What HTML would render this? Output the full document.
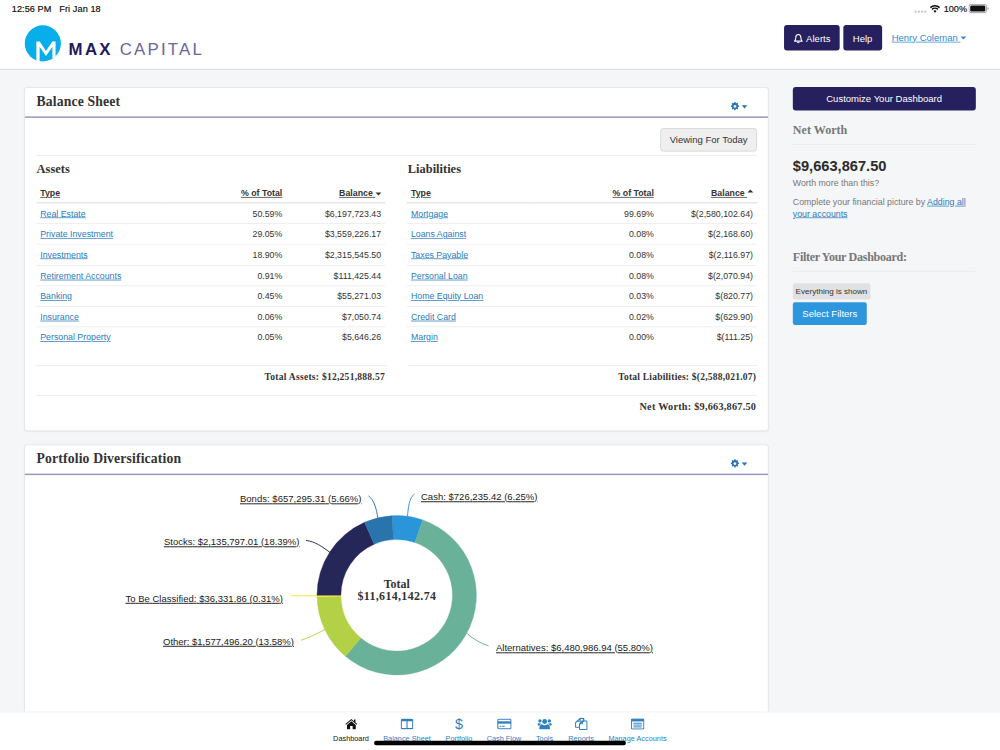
<!DOCTYPE html>
<html lang="en">
<head>
<meta charset="utf-8">
<title>Max Capital - Dashboard</title>
<style>
*{box-sizing:border-box;}
html,body{margin:0;padding:0;width:1000px;height:750px;overflow:hidden;background:#f5f6f8;}
body{font-family:"Liberation Sans",Arial,sans-serif;color:#333;}
#stage{position:absolute;left:0;top:0;width:1366px;height:1025px;transform:scale(0.73206);transform-origin:0 0;background:#f5f6f8;overflow:hidden;font-size:14px;line-height:1.42857;}
a{color:#2b7bbd;text-decoration:underline;}
.serif{font-family:"Liberation Serif","Times New Roman",serif;font-weight:bold;}
/* status bar + header */
#header{position:absolute;left:0;top:0;width:1366px;height:95.3px;background:#fff;border-bottom:1.4px solid #cfd1d4;box-shadow:0 1px 2px rgba(0,0,0,.08);}
#status{position:absolute;left:0;top:0;width:1366px;height:24px;font-size:12.5px;color:#111;line-height:24px;}
#status .l{position:absolute;left:16px;top:0;letter-spacing:.1px;-webkit-text-stroke:.25px #111;}
#status .r{position:absolute;right:14px;top:0;}
.btn-navy{position:absolute;background:#27205f;color:#fff;border-radius:4px;font-size:13px;text-align:center;}
/* panels */
.panel{position:absolute;background:#fff;border:1px solid #dfe1e5;border-radius:4px;box-shadow:0 1px 2px rgba(0,0,0,.05);}
.panel > *{margin-left:1.3px;}
.panel .hd{position:absolute;left:0;top:0;right:0;height:41px;border-bottom:2px solid #9794bb;margin-left:0;}
.panel .hd h3{margin:0;position:absolute;left:16.3px;top:7.8px;font-size:18.7px;letter-spacing:.2px;line-height:24px;color:#333;}
table{border-collapse:collapse;font-size:12px;width:100%;}
th,td{padding:6px 5px 4px;line-height:17.14px;text-align:right;border-top:1px solid #e8e9eb;white-space:nowrap;}
th{padding-top:6.8px;padding-bottom:3.2px;border-top:0;border-bottom:2px solid #e4e5e7;text-decoration:underline;font-weight:bold;color:#333;vertical-align:bottom;}
th:first-child,td:first-child{text-align:left;}
th:last-child,td:last-child{padding-right:5.8px;}
.tot{position:absolute;font-size:13px;text-align:right;color:#333;}
.sub{position:absolute;font-size:17px;color:#333;}

.hr{position:absolute;height:0;border-top:1px solid #e6e7e9;}
.tw{position:absolute;}
.gear{position:absolute;left:964.5px;top:18.1px;}
.btn-def{position:absolute;background:#efefef;border:1px solid #cfcfcf;border-radius:4px;color:#333;font-size:14px;text-align:center;}
.sh{position:absolute;font-size:16.5px;line-height:24px;color:#777;}
td a{color:#2b7bbd;}
.c1{width:36%;}
.c3{width:28.5%;}
.car{display:inline-block;width:0;height:0;border-left:4px solid transparent;border-right:4px solid transparent;vertical-align:middle;}
.car.down{border-top:4.5px solid #333;}
.car.up{border-bottom:4.5px solid #333;margin-top:-7px;}
th{text-decoration:none;}
th:first-child,th:nth-child(2),th .u{text-decoration:underline;}
#nav{position:absolute;left:0;top:972px;width:1366px;height:54px;background:#fff;border-top:1px solid #eeeff1;}
.ni{position:absolute;top:0;width:140px;height:52px;text-align:center;font-size:10px;}
.ni svg{position:absolute;left:50%;top:15.6px;transform:translate(-50%,-50%);}
.ni span{position:absolute;left:0;right:0;top:28.9px;line-height:14px;}
#homebar{position:absolute;left:511px;top:38.5px;width:344px;height:6.5px;border-radius:3.5px;background:#000;}
</style>
</head>
<body>
<div id="stage">


<div id="header">
  <div id="status">
    <span class="l">12:56 PM&nbsp;&nbsp; Fri Jan 18</span>
    <svg class="sig" width="20" height="6" viewBox="0 0 20 6" style="position:absolute;left:1247.5px;top:12.7px"><g fill="#c6c6ca"><circle cx="2.7" cy="3" r="1.55"/><circle cx="7.1" cy="3" r="1.55"/><circle cx="11.5" cy="3" r="1.55"/><circle cx="15.9" cy="3" r="1.55"/></g></svg>
    <svg width="14.4" height="11" viewBox="0 0 17 13" style="position:absolute;left:1270.3px;top:7.4px"><path d="M8.5 12.2 L5.9 9.3 A3.9 3.9 0 0 1 11.1 9.3 Z" fill="#111"/><path d="M3.7 6.9 A6.9 6.9 0 0 1 13.3 6.9" fill="none" stroke="#111" stroke-width="2.5"/><path d="M1.1 4.1 A10.6 10.6 0 0 1 15.9 4.1" fill="none" stroke="#111" stroke-width="2.5"/></svg>
    <span style="position:absolute;left:1289px;top:0;font-size:12.5px;-webkit-text-stroke:.25px #111;">100%</span>
    <svg width="30" height="14" viewBox="0 0 30 14" style="position:absolute;left:1323px;top:5px"><rect x="0.6" y="0.9" width="24" height="11.4" rx="3" fill="none" stroke="#8a8a8e" stroke-width="1.1"/><rect x="2.3" y="2.6" width="20.6" height="8" rx="1.6" fill="#111"/><path d="M26.2 4.6 a2.4 2.4 0 0 1 0 4.2z" fill="#8a8a8e"/></svg>
  </div>
  <svg id="logo" width="300" height="60" viewBox="0 0 300 60" style="position:absolute;left:30px;top:30px;overflow:visible">
    <circle cx="28.5" cy="29.3" r="24.7" fill="#08aeea"/>
    <path d="M19.7 53.8 V26.8 H24.2 L32.8 39.6 L41.4 26.8 H45.9 V47.5 L41.6 50.5 V33.8 L32.8 46.6 L24.1 33.8 V54.4 Z" fill="#fff"/>
    <text x="63.6" y="44.5" font-family="Liberation Sans, Arial, sans-serif" font-weight="bold" font-size="23" fill="#1f1a5c" textLength="57.5" lengthAdjust="spacing">MAX</text>
    <text x="133.6" y="44.5" font-family="Liberation Sans, Arial, sans-serif" font-size="23" fill="#6a659c" textLength="112" lengthAdjust="spacing">CAPITAL</text>
  </svg>
  <div class="btn-navy" style="left:1071px;top:34px;width:76px;height:35px;line-height:37px;padding-left:17.6px;">
    <svg width="13" height="14" viewBox="0 0 13 14" style="position:absolute;left:13px;top:11.8px"><path d="M6.5 1.2 C4.2 1.2 3 3 3 5.4 C3 8.2 2.2 9.2 1.2 10.2 H11.8 C10.800 9.2 10 8.200 10 5.4 C10 3 8.800 1.2 6.5 1.2 Z" fill="none" stroke="#fff" stroke-width="1.45" stroke-linejoin="round"/><path d="M5.300 11.6 a1.3 1.3 0 0 0 2.400 0" fill="none" stroke="#fff" stroke-width="1.45"/><path d="M6.5 0.300 V1.2" stroke="#fff" stroke-width="1.45"/></svg>
    Alerts</div>
  <div class="btn-navy" style="left:1152px;top:34px;width:52.5px;height:35px;line-height:37px;">Help</div>
  <a style="position:absolute;left:1218px;top:41.8px;font-size:13px;line-height:20px;white-space:pre;color:#2f8bd0">Henry Coleman </a>
  <span style="position:absolute;left:1311.5px;top:50px;width:0;height:0;border-left:4.5px solid transparent;border-right:4.5px solid transparent;border-top:4.5px solid #2f8bd0;"></span>
</div>

<!-- Balance sheet -->
<div class="panel" id="bs" style="left:32.7px;top:118.7px;width:1017.3px;height:470.3px;">
  <div class="hd"><h3 class="serif">Balance Sheet</h3><svg class="gear" width="24" height="14" viewBox="0 0 24 14"><path transform="translate(0.35 0.95) scale(0.935)" fill="#2673b8" fill-rule="evenodd" d="M5.1 0.500h1.800l0.300 1.500 1 0.400 1.300-0.800 1.300 1.300-0.800 1.300 0.400 1 1.500 0.300v1.800l-1.500 0.300-0.400 1 0.800 1.300-1.300 1.300-1.300-0.800-1 0.400-0.300 1.500h-1.800l-0.300-1.500-1-0.400-1.300 0.800-1.300-1.300 0.800-1.300-0.400-1-1.500-0.300v-1.800l1.500-0.300 0.400-1-0.800-1.300 1.300-1.300 1.300 0.800 1-0.400z M6 4.700a2.100 2.100 0 1 0 0.001 0z"/><path d="M15.200 5.800 h7.600 l-3.800 4.400z" fill="#2673b8"/></svg></div>
  <div class="btn-def" style="left:867px;top:55.5px;width:132px;height:32px;line-height:32px;font-size:13px;">Viewing For Today</div>
  <div class="hr" style="left:15px;top:92.5px;width:984px;"></div>
  <div class="sub serif" style="left:15px;top:99px;">Assets</div>
  <div class="sub serif" style="left:522px;top:99px;">Liabilities</div>
  <div class="tw" style="left:15px;top:129.4px;width:476.4px;"><table><thead><tr><th class="c1">Type</th><th>% of Total</th><th class="c3"><span class="u">Balance&nbsp;</span><i class="car down"></i></th></tr></thead><tbody>
<tr><td><a>Real Estate</a></td><td>50.59%</td><td>$6,197,723.43</td></tr>
<tr><td><a>Private Investment</a></td><td>29.05%</td><td>$3,559,226.17</td></tr>
<tr><td><a>Investments</a></td><td>18.90%</td><td>$2,315,545.50</td></tr>
<tr><td><a>Retirement Accounts</a></td><td>0.91%</td><td>$111,425.44</td></tr>
<tr><td><a>Banking</a></td><td>0.45%</td><td>$55,271.03</td></tr>
<tr><td><a>Insurance</a></td><td>0.06%</td><td>$7,050.74</td></tr>
<tr><td><a>Personal Property</a></td><td>0.05%</td><td>$5,646.26</td></tr>
</tbody></table></div>
  <div class="tw" style="left:521.4px;top:129.4px;width:478px;"><table><thead><tr><th class="c1">Type</th><th>% of Total</th><th class="c3"><span class="u">Balance&nbsp;</span><i class="car up"></i></th></tr></thead><tbody>
<tr><td><a>Mortgage</a></td><td>99.69%</td><td>$(2,580,102.64)</td></tr>
<tr><td><a>Loans Against</a></td><td>0.08%</td><td>$(2,168.60)</td></tr>
<tr><td><a>Taxes Payable</a></td><td>0.08%</td><td>$(2,116.97)</td></tr>
<tr><td><a>Personal Loan</a></td><td>0.08%</td><td>$(2,070.94)</td></tr>
<tr><td><a>Home Equity Loan</a></td><td>0.03%</td><td>$(820.77)</td></tr>
<tr><td><a>Credit Card</a></td><td>0.02%</td><td>$(629.90)</td></tr>
<tr><td><a>Margin</a></td><td>0.00%</td><td>$(111.25)</td></tr>
</tbody></table></div>
  <div class="hr" style="left:15px;top:379px;width:478px;"></div>
  <div class="hr" style="left:523px;top:379px;width:477px;"></div>
  <div class="tot serif" style="right:523px;top:386.3px;letter-spacing:.36px;">Total Assets: $12,251,888.57</div>
  <div class="tot serif" style="right:16px;top:386.3px;letter-spacing:.3px;">Total Liabilities: $(2,588,021.07)</div>
  <div class="hr" style="left:15px;top:420.2px;width:984px;"></div>
  <div class="tot serif" style="right:16px;top:426px;font-size:14px;letter-spacing:.32px;">Net Worth: $9,663,867.50</div>
</div>

<!-- Portfolio -->
<div class="panel" id="pf" style="left:32.7px;top:606.6px;width:1017.3px;height:440px;">
  <div class="hd"><h3 class="serif">Portfolio Diversification</h3><svg class="gear" width="24" height="14" viewBox="0 0 24 14"><path transform="translate(0.35 0.95) scale(0.935)" fill="#2673b8" fill-rule="evenodd" d="M5.1 0.500h1.800l0.300 1.500 1 0.400 1.300-0.800 1.300 1.300-0.800 1.300 0.400 1 1.500 0.300v1.800l-1.500 0.300-0.400 1 0.800 1.300-1.300 1.300-1.300-0.800-1 0.400-0.300 1.500h-1.800l-0.300-1.500-1-0.400-1.300 0.800-1.300-1.300 0.800-1.300-0.400-1-1.500-0.300v-1.800l1.500-0.300 0.400-1-0.800-1.300 1.300-1.300 1.300 0.800 1-0.400z M6 4.700a2.100 2.100 0 1 0 0.001 0z"/><path d="M15.200 5.800 h7.600 l-3.800 4.400z" fill="#2673b8"/></svg></div>
  <svg id="chart" width="1014" height="330" viewBox="0 0 1014 330" style="position:absolute;left:0;top:42px;font-family:'Liberation Sans',Arial,sans-serif;">
<path d="M500.44 54.46 A108.87 108.87 0 0 1 542.52 60.26 L531.84 91.11 A76.22 76.22 0 0 0 502.37 87.05 Z" fill="#2b95d9" stroke="#2b95d9" stroke-width="0.5"/>
<path d="M542.52 60.26 A108.87 108.87 0 1 1 436.91 246.54 L457.90 221.53 A76.22 76.22 0 1 0 531.84 91.11 Z" fill="#69b198" stroke="#69b198" stroke-width="0.5"/>
<path d="M436.91 246.54 A108.87 108.87 0 0 1 398.04 165.24 L430.69 164.61 A76.22 76.22 0 0 0 457.90 221.53 Z" fill="#b3d146" stroke="#b3d146" stroke-width="0.5"/>
<path d="M398.04 165.24 A108.87 108.87 0 0 1 398.02 163.12 L430.67 163.13 A76.22 76.22 0 0 0 430.69 164.61 Z" fill="#f7ea2e" stroke="#f7ea2e" stroke-width="0.5"/>
<path d="M398.02 163.12 A108.87 108.87 0 0 1 463.00 63.51 L476.16 93.39 A76.22 76.22 0 0 0 430.67 163.13 Z" fill="#262759" stroke="#262759" stroke-width="0.5"/>
<path d="M463.00 63.51 A108.87 108.87 0 0 1 500.44 54.46 L502.37 87.05 A76.22 76.22 0 0 0 476.16 93.39 Z" fill="#2974ad" stroke="#2974ad" stroke-width="0.5"/>
<path d="M521.6 55.5 C522.6 44.6 523.7 29.5 531.2 24.8" fill="none" stroke="#2b95d9" stroke-width="1.3"/>
<path d="M481.1 57.3 C479.3 45.9 475.9 32.3 468.4 27.5" fill="none" stroke="#2974ad" stroke-width="1.3"/>
<path d="M415.8 104.7 C404.9 96.5 395.3 89.6 383.0 88.3" fill="none" stroke="#262759" stroke-width="1.3"/>
<path d="M398.0 163.8 L362.5 163.8" fill="none" stroke="#f7ea2e" stroke-width="1.6"/>
<path d="M409.5 209.6 C398.0 215.3 388.5 220.8 376.2 224.6" fill="none" stroke="#b3d146" stroke-width="1.3"/>
<path d="M603.2 215.6 C611.1 222.2 620.7 229.0 632.3 232.1" fill="none" stroke="#69b198" stroke-width="1.3"/>
<text x="292.8" y="36.2" font-size="13" fill="#1a1a1a" text-decoration="underline" textLength="166.0" lengthAdjust="spacing">Bonds: $657,295.31 (5.66%)</text>
<text x="540.1" y="33.4" font-size="13" fill="#1a1a1a" text-decoration="underline" textLength="159.1" lengthAdjust="spacing">Cash: $726,235.42 (6.25%)</text>
<text x="189.0" y="94.9" font-size="13" fill="#1a1a1a" text-decoration="underline" textLength="185.1" lengthAdjust="spacing">Stocks: $2,135,797.01 (18.39%)</text>
<text x="136.4" y="172.1" font-size="13" fill="#1a1a1a" text-decoration="underline" textLength="215.1" lengthAdjust="spacing">To Be Classified: $36,331.86 (0.31%)</text>
<text x="187.7" y="230.8" font-size="13" fill="#1a1a1a" text-decoration="underline" textLength="178.9" lengthAdjust="spacing">Other: $1,577,496.20 (13.58%)</text>
<text x="642.5" y="239.7" font-size="13" fill="#1a1a1a" text-decoration="underline" textLength="214.5" lengthAdjust="spacing">Alternatives: $6,480,986.94 (55.80%)</text>
<text x="506.9" y="152.6" text-anchor="middle" font-family="Liberation Serif, Times New Roman, serif" font-weight="bold" font-size="16.300" fill="#333">Total</text>
<text x="506.9" y="169.7" text-anchor="middle" font-family="Liberation Serif, Times New Roman, serif" font-weight="bold" font-size="16.300" fill="#333" textLength="107.2" lengthAdjust="spacing">$11,614,142.74</text>
</svg>
</div>

<!-- Sidebar -->
<div id="side">
  <div class="btn-navy" style="left:1083px;top:119.4px;width:249.5px;height:32px;line-height:33px;font-size:13px;">Customize Your Dashboard</div>
  <div class="sh serif" style="left:1083px;top:166px;">Net Worth</div>
  <div class="hr" style="left:1083px;top:197px;width:249px;"></div>
  <div style="position:absolute;left:1083px;top:212px;font-size:20px;font-weight:bold;line-height:30px;color:#2b2b2b;">$9,663,867.50</div>
  <div style="position:absolute;left:1083px;top:242px;font-size:12px;line-height:17px;color:#777;">Worth more than this?</div>
  <div style="position:absolute;left:1083px;top:267.6px;width:249px;font-size:12px;line-height:16.6px;color:#777;">Complete your financial picture by <a>Adding all your accounts</a></div>
  <div class="sh serif" style="left:1083px;top:339px;letter-spacing:-.42px;">Filter Your Dashboard:</div>
  <div class="hr" style="left:1083px;top:370px;width:249px;"></div>
  <div style="position:absolute;left:1083px;top:386.5px;width:105.5px;height:22px;line-height:22px;background:#e1e1e1;border-radius:3px;font-size:11px;color:#333;text-align:center;">Everything is shown</div>
  <div style="position:absolute;left:1083px;top:412.5px;width:101px;height:31.5px;line-height:31.5px;background:#2e96dc;border-radius:3px;font-size:13px;color:#fff;text-align:center;">Select Filters</div>
</div>

<!-- bottom nav -->
<div id="nav">
<div class="ni" style="left:409.5px;color:#111"><svg width="18" height="16" viewBox="0 0 18 16"><path d="M9 1.2 L0.800 8 L1.7 9 L9 3 L16.300 9 L17.200 8 L14.600 5.800 V2 H12.600 V4.200 Z" fill="#111"/><path d="M9 4.300 L3 9.300 V15 H7.300 V10.800 H10.700 V15 H15 V9.300 Z" fill="#111"/></svg><span>Dashboard</span></div>
<div class="ni" style="left:486.0px;color:#2f7fc1"><svg width="18" height="16" viewBox="0 0 18 16"><rect x="1.2" y="1.700" width="15.600" height="12.600" rx="1.3" fill="none" stroke="#2f7fc1" stroke-width="1.500"/><path d="M1.2 3.200H16.800" stroke="#2f7fc1" stroke-width="1.800"/><path d="M9 2V14.300" stroke="#2f7fc1" stroke-width="1.500"/></svg><span>Balance Sheet</span></div>
<div class="ni" style="left:557.0px;color:#2f7fc1"><svg width="12" height="18" viewBox="0 0 12 18"><text x="6" y="15.800" text-anchor="middle" font-family="Liberation Sans, Arial, sans-serif" font-size="19.500" fill="#2f7fc1">$</text></svg><span>Portfolio</span></div>
<div class="ni" style="left:618.5px;color:#2f7fc1"><svg width="20" height="16" viewBox="0 0 20 16"><rect x="1" y="1.500" width="18" height="13" rx="1.600" fill="none" stroke="#2f7fc1" stroke-width="1.500"/><rect x="1" y="4.300" width="18" height="3.200" fill="#2f7fc1"/><rect x="3.300" y="10.500" width="2.400" height="1.300" fill="#2f7fc1"/><rect x="6.700" y="10.500" width="3.800" height="1.300" fill="#2f7fc1"/></svg><span>Cash Flow</span></div>
<div class="ni" style="left:673.8px;color:#2f7fc1"><svg width="20" height="16" viewBox="0 0 20 16"><g fill="#2f7fc1"><circle cx="10" cy="4.600" r="3.300"/><path d="M4 15.300 C3 15.300 2.700 14.600 2.700 13.800 C2.700 10.500 4.200 8.300 6.300 8.300 C7.300 9.300 8.600 9.800 10 9.800 C11.400 9.800 12.700 9.300 13.700 8.300 C15.800 8.300 17.300 10.500 17.300 13.800 C17.300 14.600 17 15.300 16 15.300 Z"/><circle cx="3.600" cy="3.800" r="2.300"/><circle cx="16.400" cy="3.800" r="2.300"/><path d="M0.300 9.300 C0.300 7.700 1 6.600 2 6.600 C3 7.300 4.300 7.500 5.300 7.200 C4.300 7.900 3.500 8.800 3.100 9.900 H1.200 C0.600 9.900 0.300 9.700 0.300 9.300 Z"/><path d="M19.700 9.300 C19.700 7.700 19 6.600 18 6.600 C17 7.300 15.700 7.500 14.700 7.200 C15.700 7.900 16.500 8.800 16.900 9.900 H18.800 C19.400 9.900 19.700 9.700 19.700 9.300 Z"/></g></svg><span>Tools</span></div>
<div class="ni" style="left:723.7px;color:#2f7fc1"><svg width="18" height="17" viewBox="0 0 18 17"><g fill="none" stroke="#2f7fc1" stroke-width="1.400" stroke-linejoin="round"><path d="M7.500 4.700 V1.600 a0.800 0.800 0 0 1 0.800 -0.800 H12.300 V4.700 Z M7.500 0.800 L3.300 4.700 H7.500" /><path d="M3.300 4.700 L1 7 V12.200 a0.800 0.800 0 0 0 0.800 0.800 H6.600"/><path d="M12.300 0.800 V4.500"/><path d="M10.500 8.300 V5.200 a0.800 0.800 0 0 1 0.800 -0.800 H16 a0.800 0.800 0 0 1 0.800 0.800 V15.300 a0.800 0.800 0 0 1 -0.800 0.800 H7.400 a0.800 0.800 0 0 1 -0.800 -0.800 V8.300 Z M10.500 4.400 L6.600 8.300"/></g></svg><span>Reports</span></div>
<div class="ni" style="left:800.8px;color:#2f7fc1"><svg width="19" height="16" viewBox="0 0 19 16"><rect x="1" y="1.300" width="17" height="13.400" rx="1.300" fill="none" stroke="#2f7fc1" stroke-width="1.400"/><rect x="1" y="1.300" width="17" height="3.200" fill="#2f7fc1"/><g fill="#2f7fc1"><rect x="3.800" y="6.300" width="11.400" height="1.300"/><rect x="3.800" y="8.800" width="11.400" height="1.300"/><rect x="3.800" y="11.300" width="11.400" height="1.300"/></g></svg><span>Manage Accounts</span></div>
<div id="homebar"></div>
</div>

</div>
</body>
</html>
